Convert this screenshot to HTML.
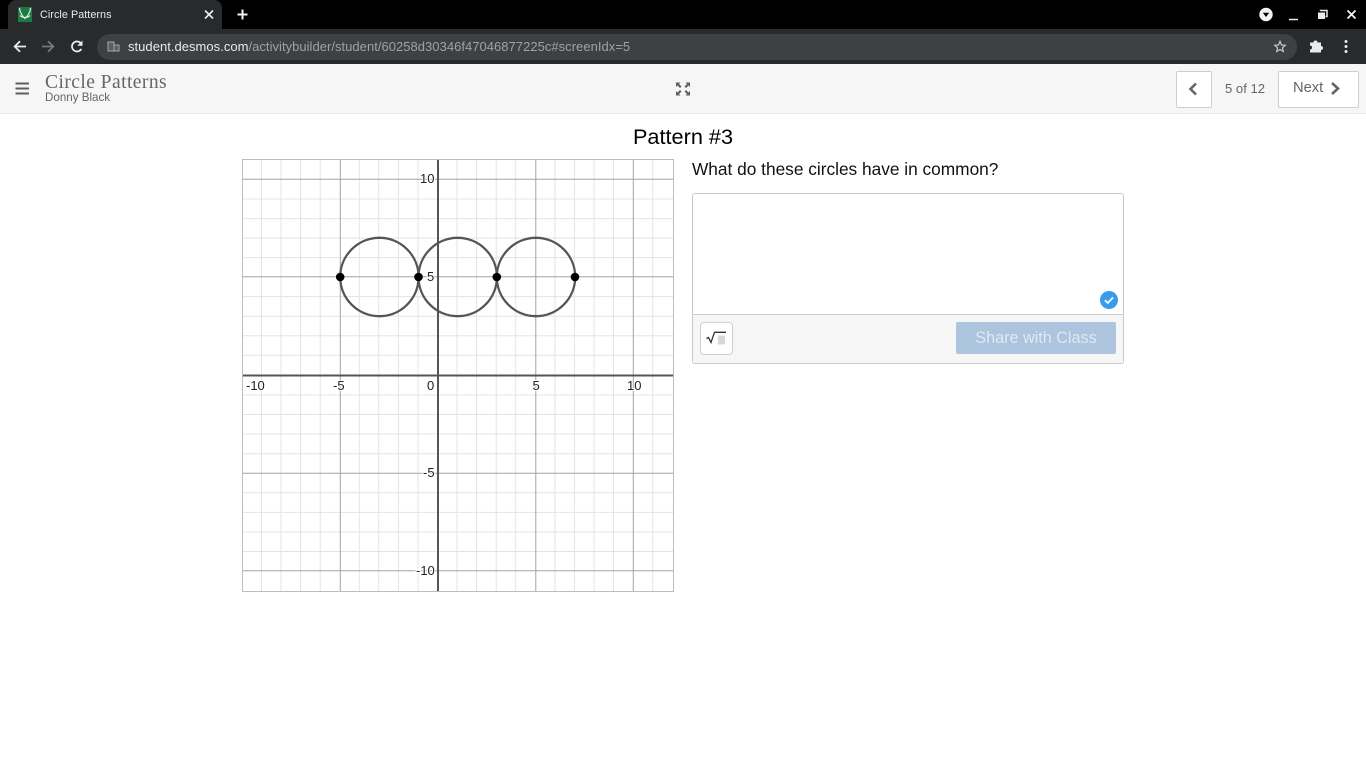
<!DOCTYPE html>
<html>
<head>
<meta charset="utf-8">
<title>Circle Patterns</title>
<style>
html,body{margin:0;padding:0;background:#fff;width:1366px;height:768px;overflow:hidden;font-family:"Liberation Sans",sans-serif;}
.a{position:absolute;white-space:nowrap;}
svg{position:absolute;overflow:visible;}
</style>
</head>
<body>
<!-- browser chrome -->
<div class="a" style="left:0;top:0;width:1366px;height:29px;background:#000;"></div>
<div class="a" style="left:8px;top:0;width:214px;height:29px;background:#292a2c;border-radius:8px 8px 0 0;"></div>
<div class="a" style="left:0;top:29px;width:1366px;height:35px;background:#292a2c;"></div>
<div class="a" style="left:97px;top:34px;width:1200px;height:26px;background:#3f4042;border-radius:13px;"></div>

<svg style="left:0;top:0;" width="1366" height="64" viewBox="0 0 1366 64">
  <rect x="18" y="7" width="14" height="15" fill="#1e7a43"/>
  <path d="M19.500 8C20 13 22 15.500 25 18.500C28 15.500 30 13 30.500 8M20 15.500C22 18 28 18 30 15.500" fill="none" stroke="#d8efe0" stroke-width="1.200"/>
  <path d="M205 10.500L213 18.500M213 10.500L205 18.500" stroke="#e8eaed" stroke-width="1.700"/>
  <path d="M242.500 9.500V19.500M237.500 14.500H247.500" stroke="#f1f3f4" stroke-width="2"/>
  <path d="M26 46.500H15M20 41.200L14.700 46.500L20 51.800" fill="none" stroke="#e8eaed" stroke-width="1.800"/>
  <path d="M42 46.500H53M48 41.200L53.300 46.500L48 51.800" fill="none" stroke="#77787a" stroke-width="1.800"/>
  <path d="M81.300 49A5 5 0 1 1 81.600 44.500" fill="none" stroke="#e8eaed" stroke-width="1.800"/>
  <path d="M82.500 40.500V45.800H77.200Z" fill="#e8eaed"/>
  <path d="M108 42H114V51H108ZM114 45H119V51H114Z" fill="#5c5d5f" stroke="#a5a6a8" stroke-width="1"/>
  <path d="M1280 41.300L1281.500 45L1285.300 45.300L1282.400 47.800L1283.300 51.500L1280 49.500L1276.700 51.500L1277.600 47.800L1274.700 45.300L1278.500 45Z" fill="none" stroke="#c4c6c8" stroke-width="1.200"/>
  <path d="M1310 42.500H1313.500A2 2 0 0 1 1317.500 42.500H1321V46A2 2 0 0 1 1321 50V52.500H1310V49.500A2 2 0 0 0 1310 45.500Z" fill="#e8eaed"/>
  <circle cx="1346" cy="41.500" r="1.500" fill="#e8eaed"/><circle cx="1346" cy="46.500" r="1.500" fill="#e8eaed"/><circle cx="1346" cy="51.500" r="1.500" fill="#e8eaed"/>
  <circle cx="1266" cy="14.500" r="6.700" fill="#f1f3f4"/>
  <path d="M1262.800 12.800H1269.200L1266 17Z" fill="#000"/>
  <path d="M1289 19.500H1298" stroke="#e8eaed" stroke-width="1.500"/>
  <path d="M1320.500 11V10.500H1327V16.500H1325.500" fill="none" stroke="#e8eaed" stroke-width="1.500"/>
  <rect x="1318" y="12.500" width="7" height="6.500" fill="#e8eaed"/>
  <path d="M1347.500 10.500L1355.500 18.500M1355.500 10.500L1347.500 18.500" stroke="#f1f3f4" stroke-width="1.800"/>
</svg>

<div class="a" style="left:40px;top:7.500px;font-size:10.800px;line-height:15px;color:#e8eaed;letter-spacing:.05px;">Circle Patterns</div>
<div class="a" style="left:128px;top:39px;font-size:13px;line-height:16px;color:#e8eaed;letter-spacing:.03px;">student.desmos.com<span style="color:#9fa1a3;">/activitybuilder/student/60258d30346f47046877225c#screenIdx=5</span></div>

<!-- app header -->
<div class="a" style="left:0;top:64px;width:1366px;height:49px;background:#f6f6f6;border-bottom:1px solid #e8e8e8;"></div>
<svg style="left:0;top:64px;" width="1366" height="50" viewBox="0 64 1366 50">
  <path d="M15.500 83.500H29M15.500 88.500H29M15.500 93.500H29" stroke="#5f5f5f" stroke-width="2"/>
  <g fill="#5f5f5f">
    <path d="M676 82.500H680.500L679 84L681.500 86.500L680 88L677.500 85.500L676 87Z"/>
    <path d="M690 82.500H685.500L687 84L684.500 86.500L686 88L688.500 85.500L690 87Z"/>
    <path d="M676 95.500H680.500L679 94L681.500 91.500L680 90L677.500 92.500L676 91Z"/>
    <path d="M690 95.500H685.500L687 94L684.500 91.500L686 90L688.500 92.500L690 91Z"/>
  </g>
</svg>
<div class="a" style="left:45px;top:72px;font-family:'Liberation Serif',serif;font-size:19.500px;line-height:22px;color:#666;letter-spacing:.45px;">Circle Patterns</div>
<div class="a" style="left:45px;top:91px;font-size:11.600px;line-height:14px;color:#666;">Donny Black</div>

<div class="a" style="left:1176px;top:71px;width:34px;height:35px;background:#fff;border:1px solid #cfcfcf;border-radius:2px;"></div>
<div class="a" style="left:1278px;top:71px;width:79px;height:35px;background:#fff;border:1px solid #cfcfcf;border-radius:2px;"></div>
<svg style="left:0;top:64px;" width="1366" height="50" viewBox="0 64 1366 50">
  <path d="M1196 83.500L1190.500 89L1196 94.500" fill="none" stroke="#666" stroke-width="2.600"/>
  <path d="M1332 83L1338 88.500L1332 94" fill="none" stroke="#666" stroke-width="2.600"/>
</svg>
<div class="a" style="left:1225px;top:81px;font-size:13.100px;line-height:16px;color:#666;">5 of 12</div>
<div class="a" style="left:1293px;top:80px;font-size:14.700px;line-height:17px;color:#666;">Next</div>

<!-- title -->
<div class="a" style="left:0;top:124px;width:1366px;text-align:center;font-size:21.700px;line-height:25px;color:#000;">Pattern #3</div>

<!-- graph -->
<svg style="left:0;top:0;" width="1366" height="768" viewBox="0 0 1366 768">
  <rect x="242.500" y="159.500" width="431" height="432" fill="#fff"/>
  <path d="M261.500 160V591M281 160V591M300.600 160V591M320.200 160V591M359.300 160V591M378.800 160V591M398.400 160V591M418 160V591M457 160V591M476.600 160V591M496.200 160V591M515.700 160V591M554.900 160V591M574.400 160V591M594 160V591M613.500 160V591M652.700 160V591" stroke="#e4e4e4" stroke-width="1" fill="none"/>
  <path d="M243 199H673M243 218.600H673M243 238.100H673M243 257.600H673M243 296.600H673M243 316.200H673M243 335.800H673M243 355.300H673M243 395H673M243 414.500H673M243 434H673M243 453.700H673M243 492.800H673M243 512.400H673M243 532H673M243 551.500H673" stroke="#e4e4e4" stroke-width="1" fill="none"/>
  <path d="M340.300 160V591M535.800 160V591M633.300 160V591M243 179.300H673M243 276.800H673M243 473.200H673M243 570.800H673" stroke="#a3a3a3" stroke-width="1" fill="none"/>
  <path d="M438 160V591M243 375.500H673" stroke="#555" stroke-width="2" fill="none"/>
  <rect x="242.500" y="159.500" width="431" height="432" fill="none" stroke="#bdbdbd" stroke-width="1"/>
  <g fill="none" stroke="#555" stroke-width="2.300">
    <circle cx="379.400" cy="277" r="39.200"/>
    <circle cx="457.700" cy="277" r="39.200"/>
    <circle cx="536" cy="277" r="39.200"/>
  </g>
  <g fill="#000">
    <circle cx="340.200" cy="277" r="4.300"/>
    <circle cx="418.500" cy="277" r="4.300"/>
    <circle cx="496.800" cy="277" r="4.300"/>
    <circle cx="575" cy="277" r="4.300"/>
  </g>
  <g font-family="'Liberation Sans',sans-serif" font-size="13" fill="#222" stroke="#fff" stroke-width="2" paint-order="stroke">
    <text x="420" y="183">10</text>
    <text x="427" y="281">5</text>
    <text x="423" y="477">-5</text>
    <text x="416" y="575">-10</text>
    <text x="246" y="390">-10</text>
    <text x="333" y="390">-5</text>
    <text x="427" y="390">0</text>
    <text x="532.500" y="390">5</text>
    <text x="627" y="390">10</text>
  </g>
</svg>

<!-- question -->
<div class="a" style="left:692px;top:159px;font-size:17.300px;line-height:20px;color:#111;">What do these circles have in common?</div>
<div class="a" style="left:692px;top:193px;width:430px;height:169px;border:1px solid #c8c8c8;border-radius:3px;background:#fff;"></div>
<div class="a" style="left:693px;top:314px;width:430px;height:48px;background:#f6f6f6;border-top:1px solid #cdcdcd;border-radius:0 0 3px 3px;"></div>
<div class="a" style="left:700px;top:322px;width:31px;height:31px;background:#fff;border:1px solid #cfcfcf;border-radius:4px;"></div>
<svg style="left:0;top:0;" width="1366" height="768" viewBox="0 0 1366 768">
  <rect x="718" y="335.500" width="7" height="9" fill="#d8d8d8"/>
  <path d="M706.500 338.500L708.500 337.500L711 342.500L714.500 332.300H726" fill="none" stroke="#333" stroke-width="1.300"/>
  <circle cx="1109" cy="300" r="9" fill="#3a9bea"/>
  <path d="M1105 300.200L1107.800 303L1113 297.500" fill="none" stroke="#fff" stroke-width="1.800"/>
</svg>
<div class="a" style="left:956px;top:322px;width:160px;height:32px;background:#adc4de;border-radius:2px;color:#dfe8f2;font-size:16.200px;line-height:32px;text-align:center;">Share with Class</div>
</body>
</html>
